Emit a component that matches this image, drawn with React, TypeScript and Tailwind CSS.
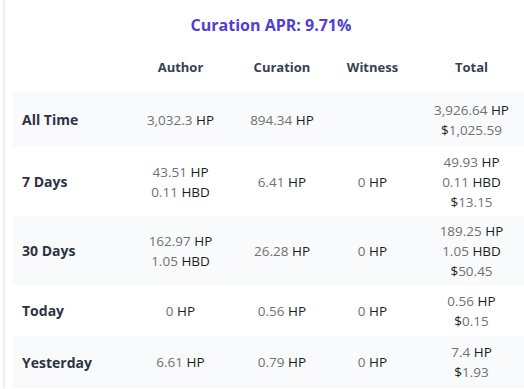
import React from "react";

type V = { n: string; u: string };
type Row = { label: string; author: V[]; curation: V[]; witness: V[]; total: V[]; h: string; gray: boolean };

const hp = (n: string): V => ({ n, u: "HP" });
const hbd = (n: string): V => ({ n, u: "HBD" });
const usd = (n: string): V => ({ n, u: "$" });

const rows: Row[] = [
  { label: "All Time", author: [hp("3,032.3")], curation: [hp("894.34")], witness: [], total: [hp("3,926.64"), usd("1,025.59")], h: "h-[55px]", gray: true },
  { label: "7 Days", author: [hp("43.51"), hbd("0.11")], curation: [hp("6.41")], witness: [hp("0")], total: [hp("49.93"), hbd("0.11"), usd("13.15")], h: "h-[69px]", gray: false },
  { label: "30 Days", author: [hp("162.97"), hbd("1.05")], curation: [hp("26.28")], witness: [hp("0")], total: [hp("189.25"), hbd("1.05"), usd("50.45")], h: "h-[69px]", gray: true },
  { label: "Today", author: [hp("0")], curation: [hp("0.56")], witness: [hp("0")], total: [hp("0.56"), usd("0.15")], h: "h-[51px]", gray: false },
  { label: "Yesterday", author: [hp("6.61")], curation: [hp("0.79")], witness: [hp("0")], total: [hp("7.4"), usd("1.93")], h: "h-[52px]", gray: true },
];

function Cell({ vals }: { vals: V[] }) {
  return (
    <div className="flex flex-col items-center justify-center text-[13.5px] leading-[20px]">
      {vals.map((v, i) =>
        v.u === "$" ? (
          <div key={i}>
            <span className="text-[#1c1f1c]">$</span>
            <span className="text-[#717171]">{v.n}</span>
          </div>
        ) : (
          <div key={i}>
            <span className="text-[#717171]">{v.n}</span>{" "}
            <span className="text-[#1c1f1c]">{v.u}</span>
          </div>
        )
      )}
    </div>
  );
}

const cols = "grid grid-cols-[116px_103px_100px_81px_117px]";

export default function App() {
  return (
    <div className="w-[524px] h-[389px] overflow-hidden bg-white" style={{ fontFamily: '"Open Sans", "Liberation Sans", sans-serif' }}>
      <div className="ml-[3px] w-[534px] border-l-2 border-[#eeeeee] px-2 pt-[13px]">
        <div className="text-center text-[16px] leading-[24px] font-bold text-[#4f3fd6]">Curation APR: 9.71%</div>
        <div className={`${cols} h-[48px] mt-[7px] items-center text-[13px] font-bold text-[#374151]`}>
          <div />
          <div className="text-center">Author</div>
          <div className="text-center">Curation</div>
          <div className="text-center">Witness</div>
          <div className="text-center">Total</div>
        </div>
        {rows.map((r) => (
          <div key={r.label} className={`${cols} ${r.h} items-center ${r.gray ? "bg-[#f9fafb]" : "bg-white"}`}>
            <div className="pl-[9px] text-[14px] font-bold text-[#2d3342]">{r.label}</div>
            <Cell vals={r.author} />
            <Cell vals={r.curation} />
            <Cell vals={r.witness} />
            <Cell vals={r.total} />
          </div>
        ))}
      </div>
    </div>
  );
}
